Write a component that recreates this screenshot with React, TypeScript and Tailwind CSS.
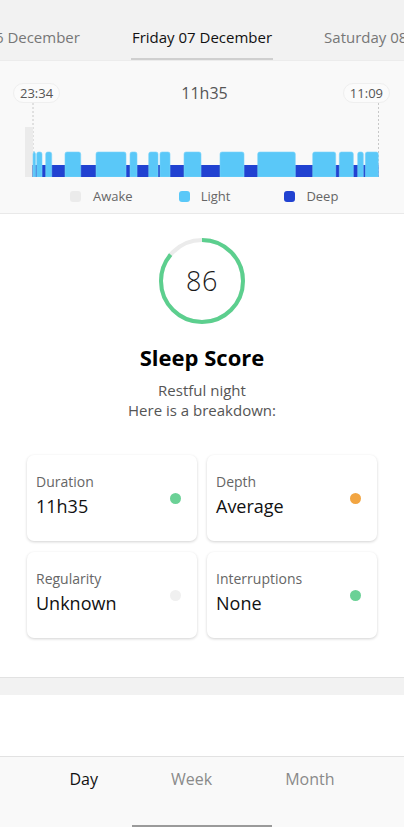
import React from 'react';

// light sleep blocks [x0, x1] in chart coordinates
const lightBlocks: [number, number][] = [
  [33, 35.5], [36.7, 42], [45.7, 51.7], [65, 80.7], [96, 126], [130, 137],
  [148.7, 158], [160, 170], [184, 201], [220, 244], [257.7, 295.3],
  [312.7, 335.7], [339.3, 353.3], [357.7, 363.3], [365.3, 378.3],
];

function SleepChart() {
  return (
    <svg width="404" height="74" viewBox="0 0 404 74" className="block">
      <line x1="33" y1="0" x2="33" y2="74" stroke="#c8c8c8" strokeWidth="1" strokeDasharray="2 2" />
      <line x1="378.5" y1="0" x2="378.5" y2="74" stroke="#c8c8c8" strokeWidth="1" strokeDasharray="2 2" />
      <rect x="25" y="24" width="8" height="50" fill="#ebebeb" />
      <rect x="33" y="62" width="345.5" height="12" fill="#2142d1" />
      {lightBlocks.map(([a, b], i) => (
        <g key={i}>
          <line x1={a} y1="62" x2={a} y2="74" stroke="#1a35b0" strokeWidth="1" />
          <path
            d={`M${a} 74 V51 Q${a} 49 ${a + 2} 49 H${b - 2} Q${b} 49 ${b} 51 V74 Z`}
            fill="#5ac8f8"
            stroke="#7ad4fa"
            strokeWidth="0.6"
          />
        </g>
      ))}
    </svg>
  );
}

function ScoreRing({ score }: { score: number }) {
  const r = 41;
  const c = 2 * Math.PI * r;
  return (
    <div className="relative w-[86px] h-[86px]">
      <svg width="86" height="86" viewBox="0 0 86 86" className="absolute inset-0">
        <circle cx="43" cy="43" r={r} fill="none" stroke="#ebebeb" strokeWidth="4" />
        <circle
          cx="43"
          cy="43"
          r={r}
          fill="none"
          stroke="#5ccf8e"
          strokeWidth="4"
          strokeDasharray={`${(c * score) / 100} ${c}`}
          transform="rotate(-90 43 43)"
        />
      </svg>
      <div className="absolute inset-0 flex items-center justify-center text-[27px] font-light text-[#1a1a1a] tracking-wide">
        {score}
      </div>
    </div>
  );
}

interface CardProps {
  label: string;
  value: string;
  dot: string;
}

function StatCard({ label, value, dot }: CardProps) {
  return (
    <div className="h-[86px] rounded-[7px] bg-white shadow-[0_1px_3px_rgba(0,0,0,0.18)] pl-[9px] pr-[16px] pt-[17px] flex justify-between">
      <div className="flex flex-col">
        <span className="text-[14px] leading-[20px] text-[#666]">{label}</span>
        <span className="text-[18px] leading-[24px] text-[#111] mt-[2px]">{value}</span>
      </div>
      <span className={`mt-[21px] w-[11px] h-[11px] rounded-full ${dot}`} />
    </div>
  );
}

export default function App() {
  return (
    <div className="w-[404px] h-[827px] bg-white flex flex-col overflow-hidden" style={{ fontFamily: '"Open Sans", "Noto Sans", sans-serif' }}>
      {/* day selector */}
      <div className="h-[61px] bg-[#f2f2f2] flex justify-center items-end overflow-hidden whitespace-nowrap gap-[51px] shrink-0 border-b border-[#ececec]">
        <div className="w-[170px] shrink-0 text-right text-[15px] text-[#777] pb-[12px]">Thursday 06 December</div>
        <div className="shrink-0 text-[15px] text-[#111] pb-[10px] border-b-2 border-[#cfcfcf] px-[1px]">Friday 07 December</div>
        <div className="w-[170px] shrink-0 text-left text-[15px] text-[#777] pb-[12px]">Saturday 08 December</div>
      </div>

      {/* chart */}
      <div className="bg-[#f9f9f9] border-b border-[#e9e9e9] pt-[22px] h-[153px] shrink-0">
        <div className="flex items-center justify-between pl-[13px] pr-[14px] h-[20px]">
          <span className="rounded-full bg-[#fbfbfb] border border-[#efefef] px-[6px] text-[13px] leading-[18px] text-[#555]">23:34</span>
          <span className="text-[16px] text-[#555] ml-[6px]">11h35</span>
          <span className="rounded-full bg-[#fbfbfb] border border-[#efefef] px-[6px] text-[13px] leading-[18px] text-[#555]">11:09</span>
        </div>
        <SleepChart />
        <div className="flex items-center mt-[10px] text-[13px] text-[#666]">
          <span className="ml-[70px] w-[11px] h-[11px] rounded-[3px] bg-[#ebebeb]" />
          <span className="ml-[12px]">Awake</span>
          <span className="ml-[46px] w-[11px] h-[11px] rounded-[3px] bg-[#5ac8f8]" />
          <span className="ml-[11px]">Light</span>
          <span className="ml-[54px] w-[11px] h-[11px] rounded-[3px] bg-[#2142d1]" />
          <span className="ml-[11px]">Deep</span>
        </div>
      </div>

      {/* score */}
      <div className="flex flex-col items-center pt-[24px] pb-[39px] border-b border-[#e2e2e2] shrink-0">
        <ScoreRing score={86} />
        <h1 className="mt-[19px] text-[22px] leading-[28px] font-bold text-black">Sleep Score</h1>
        <p className="mt-[9px] text-[15px] leading-[20px] text-[#555] text-center">
          Restful night
          <br />
          Here is a breakdown:
        </p>
        <div className="mt-[35px] w-full px-[27px] grid grid-cols-2 gap-x-[10px] gap-y-[11px]">
          <StatCard label="Duration" value="11h35" dot="bg-[#6bd196]" />
          <StatCard label="Depth" value="Average" dot="bg-[#f2a541]" />
          <StatCard label="Regularity" value="Unknown" dot="bg-[#f0f0f0]" />
          <StatCard label="Interruptions" value="None" dot="bg-[#6bd196]" />
        </div>
      </div>

      <div className="h-[17px] bg-[#f2f2f2] shrink-0" />
      <div className="h-[61px] bg-white shrink-0" />

      {/* bottom tabs */}
      <div className="flex-1 bg-[#f9f9f9] border-t border-[#e2e2e2] flex flex-col">
        <div className="flex justify-center gap-[73px] pt-[10px] text-[16px]">
          <span className="text-[#111]">Day</span>
          <span className="text-[#8a8a8a]">Week</span>
          <span className="text-[#8a8a8a]">Month</span>
        </div>
        <div className="mt-auto mx-auto w-[140px] h-[2px] bg-[#9a9a9a]" />
      </div>
    </div>
  );
}
